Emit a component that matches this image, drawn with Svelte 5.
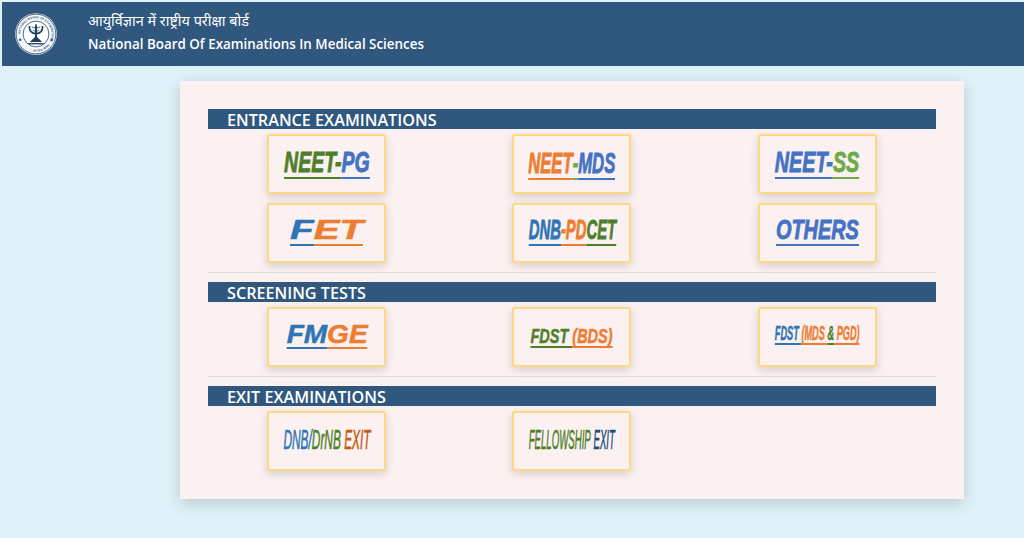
<script>
  const c = { blue:'#4472c4', sky:'#2e75b6', green:'#4f7f2c', lime:'#6cae45', orange:'#ed7d31', navy:'#1f4e79', rust:'#c55a11' };
  const sections = [
    { title:'ENTRANCE EXAMINATIONS', items:[
      { k:'pg', parts:[['NEET-',c.green],['PG',c.blue]] },
      { k:'mds', parts:[['NEET',c.orange],['-',c.lime],['MDS',c.blue]] },
      { k:'ss', parts:[['NEET-',c.blue],['SS',c.lime]] },
      { k:'fet', parts:[['F',c.sky],['ET',c.orange]] },
      { k:'pdcet', parts:[['DNB',c.sky],['-PD',c.orange],['CET',c.green]] },
      { k:'others', parts:[['OTHERS',c.blue]] }
    ]},
    { title:'SCREENING TESTS', items:[
      { k:'fmge', parts:[['FM',c.sky],['GE',c.orange]] },
      { k:'bds', parts:[['FDST\u00a0',c.green],['(BDS)',c.orange]] },
      { k:'pgd', parts:[['FDST\u00a0',c.sky],['(MDS\u00a0',c.orange],['&',c.green],['\u00a0PGD)',c.orange]] }
    ]},
    { title:'EXIT EXAMINATIONS', items:[
      { k:'drnb', parts:[['DNB/',c.sky],['DrNB\u00a0',c.green],['EXIT',c.rust]], plain:true },
      { k:'fellow', parts:[['FELLOWSHIP\u00a0',c.green],['EXIT',c.navy]], plain:true }
    ]}
  ];
</script>

<div class="page">
  <header class="top">
    <svg class="emblem" viewBox="0 0 44 44" width="42" height="42" role="img" aria-label="emblem">
      <circle cx="22" cy="22" r="21.8" fill="#f4f6f8"/>
      <circle cx="22" cy="22" r="20.8" fill="none" stroke="#30577d" stroke-width=".9"/>
      <circle cx="22" cy="22" r="13.5" fill="#fff" stroke="#30577d" stroke-width=".9"/>
      <path id="ringpath" d="M5.5 22a16.5 16.5 0 1 1 33 0a16.5 16.5 0 1 1-33 0" fill="none"/>
      <text class="ringtext"><textPath href="#ringpath">NATIONAL BOARD OF EXAMINATIONS · NEW DELHI ·</textPath></text>
      <circle cx="5.5" cy="28" r="1.3" fill="#30577d"/>
      <circle cx="38.5" cy="28" r="1.3" fill="#30577d"/>
      <path d="M15 13.5c0 5.5 3 8 7 8s7-2.500 7-8" fill="none" stroke="#1f3f5f" stroke-width="1.8"/>
      <path d="M22 12v15" stroke="#1f3f5f" stroke-width="2"/>
      <path d="M17.500 14.500c2 1.500 7 1.500 9 0M19 18c2 1.500 4 1.500 6 0" fill="none" stroke="#1f3f5f" stroke-width=".9"/>
      <path d="M15.500 30.500l6.500-6.500 6.500 6.500z" fill="#1f3f5f"/>
      <path d="M14 32.200h16" stroke="#1f3f5f" stroke-width="1.400"/>
    </svg>
    <div class="names">
      <div class="hi">आयुर्विज्ञान में राष्ट्रीय परीक्षा बोर्ड</div>
      <div class="en">National Board Of Examinations In Medical Sciences</div>
    </div>
  </header>

  <main class="panel">
    {#each sections as s, i}
      {#if i > 0}<hr class="rule" />{/if}
      <section>
        <h2 class="bar">{s.title}</h2>
        <div class="tiles">
          {#each s.items as it}
            <a class="tile" href="#top">
              <span class="logo {it.k}" class:plain={it.plain}>
                {#each it.parts as p}
                  <span class="part" style="color:{p[1]};border-color:{p[1]}">{p[0]}</span>
                {/each}
              </span>
            </a>
          {/each}
        </div>
      </section>
    {/each}
  </main>
</div>

<style>
  :global(body) { margin: 0; background: #e0f2f9; }
  .page { min-height: 538px; box-sizing: border-box; padding: 2px 0 0 2px; font-family: "Open Sans", "Noto Sans", sans-serif; overflow: hidden; }
  .top { height: 64px; background: #30577d; color: #fff; display: flex; align-items: center; padding-left: 13px; gap: 31px; box-sizing: border-box; }
  .emblem { flex: none; }
  .ringtext { font: 700 3px "Liberation Sans", sans-serif; fill: #30577d; letter-spacing: .12px; }
  .names { display: flex; flex-direction: column; gap: 4px; margin-top: -5px; }
  .hi { font-family: "Noto Sans", "Noto Sans Devanagari", "Open Sans", sans-serif; font-size: 14.4px; line-height: 20px; }
  .en { font-size: 13.4px; line-height: 18px; font-weight: 600; white-space: nowrap; }

  .panel { width: 784px; height: 418px; margin: 15px 0 0 178px; box-sizing: border-box; padding: 28.3px 28px 0; background: #fbf1f1; box-shadow: 0 4px 14px rgba(60, 70, 80, .24); }
  .bar { margin: 0; height: 20px; background: #30577d; color: #fff; font-size: 16.2px; line-height: 22px; font-weight: 600; padding-left: 19px; white-space: nowrap; }
  .tiles { display: grid; grid-template-columns: repeat(3, 119px); column-gap: 126.2px; row-gap: 9.5px; padding: 5px 0 0 59.3px; }
  .tile { height: 59.5px; box-sizing: border-box; border: 2px solid #fdd982; border-radius: 3px; display: flex; align-items: center; justify-content: center; text-decoration: none; box-shadow: 0 3px 8px rgba(70, 60, 60, .2); background: #fbf1f1; }
  .rule { border: 0; height: 1px; background: #e4dbdb; margin: 9.3px 0; }

  .logo { display: inline-flex; flex: none; white-space: nowrap; font-family: "Liberation Sans", sans-serif; font-weight: 700; font-style: italic; line-height: 1; -webkit-text-stroke: .9px currentColor; }
  .logo.plain { font-weight: 400; -webkit-text-stroke: .6px currentColor; }
  .part { display: block; border-bottom: 2px solid; padding-bottom: 0; }
  .pg { font-size: 30px; transform: translateY(-1px) scaleX(.65); }
  .mds { font-size: 29px; transform: scaleX(.575); }
  .ss { font-size: 29px; transform: translateY(-1px) scaleX(.68); }
  .fet { font-size: 27px; transform: translateY(-2px) scaleX(1.43); -webkit-text-stroke: .5px currentColor; }
  .pdcet { font-size: 28px; transform: translateY(-2px) scaleX(.53); }
  .others { font-size: 28px; transform: translateY(-2px) scaleX(.71); }
  .fmge { font-size: 25px; transform: translateY(-2px) scaleX(1.12); -webkit-text-stroke: .5px currentColor; }
  .bds { font-size: 21px; transform: translateY(-1px) scaleX(.69); -webkit-text-stroke: .5px currentColor; }
  .pgd { font-size: 20px; transform: translateY(-3px) scaleX(.46); -webkit-text-stroke: .5px currentColor; }
  .drnb { font-size: 27px; transform: scaleX(.44); }
  .drnb .part, .fellow .part { border-bottom-color: transparent !important; }
  .fellow { font-size: 27px; transform: scaleX(.357); }
</style>
